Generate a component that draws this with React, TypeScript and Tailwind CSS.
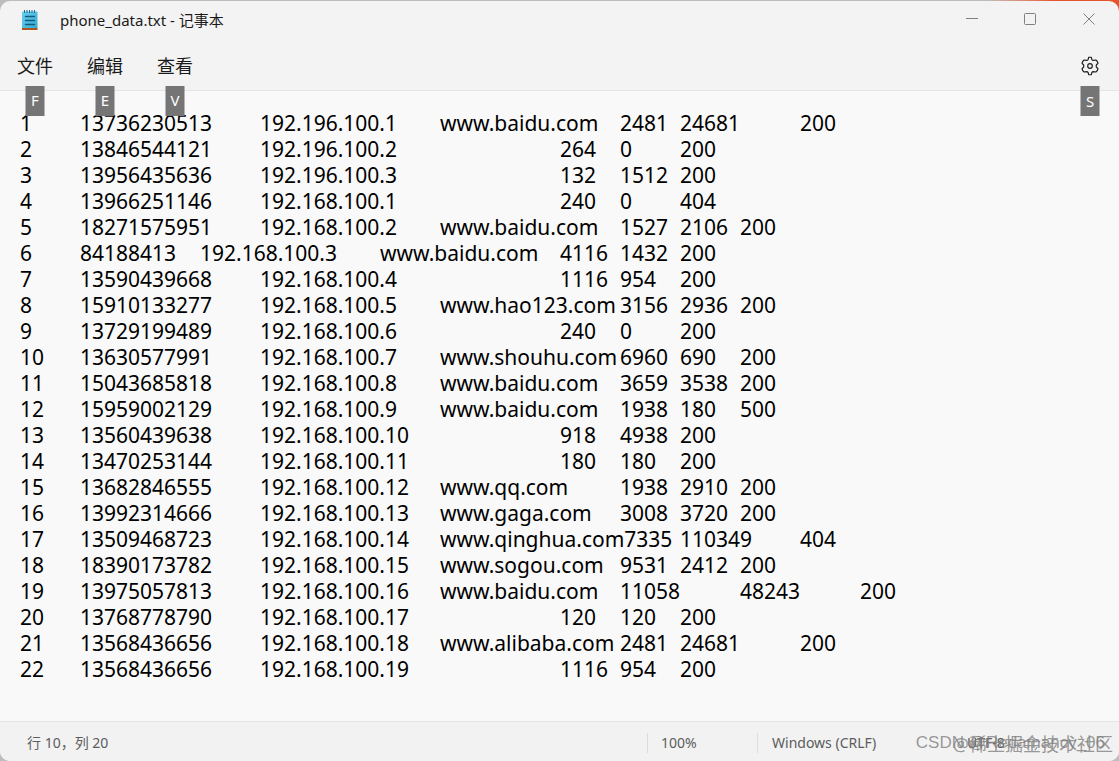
import type { ReactNode } from "react";

const menus = [
  { label: "文件", keyTip: "F" },
  { label: "编辑", keyTip: "E" },
  { label: "查看", keyTip: "V" },
];

const lines = [
  "1\t13736230513\t192.196.100.1\twww.baidu.com\t2481\t24681\t200",
  "2\t13846544121\t192.196.100.2\t\t\t264\t0\t200",
  "3\t13956435636\t192.196.100.3\t\t\t132\t1512\t200",
  "4\t13966251146\t192.168.100.1\t\t\t240\t0\t404",
  "5\t18271575951\t192.168.100.2\twww.baidu.com\t1527\t2106\t200",
  "6\t84188413\t192.168.100.3\twww.baidu.com\t4116\t1432\t200",
  "7\t13590439668\t192.168.100.4\t\t\t1116\t954\t200",
  "8\t15910133277\t192.168.100.5\twww.hao123.com\t3156\t2936\t200",
  "9\t13729199489\t192.168.100.6\t\t\t240\t0\t200",
  "10\t13630577991\t192.168.100.7\twww.shouhu.com\t6960\t690\t200",
  "11\t15043685818\t192.168.100.8\twww.baidu.com\t3659\t3538\t200",
  "12\t15959002129\t192.168.100.9\twww.baidu.com\t1938\t180\t500",
  "13\t13560439638\t192.168.100.10\t\t\t918\t4938\t200",
  "14\t13470253144\t192.168.100.11\t\t\t180\t180\t200",
  "15\t13682846555\t192.168.100.12\twww.qq.com\t1938\t2910\t200",
  "16\t13992314666\t192.168.100.13\twww.gaga.com\t3008\t3720\t200",
  "17\t13509468723\t192.168.100.14\twww.qinghua.com7335\t110349\t404",
  "18\t18390173782\t192.168.100.15\twww.sogou.com\t9531\t2412\t200",
  "19\t13975057813\t192.168.100.16\twww.baidu.com\t11058\t48243\t200",
  "20\t13768778790\t192.168.100.17\t\t\t120\t120\t200",
  "21\t13568436656\t192.168.100.18\twww.alibaba.com\t2481\t24681\t200",
  "22\t13568436656\t192.168.100.19\t\t\t1116\t954\t200",
];

function NotepadIcon() {
  return (
    <svg width="16" height="21" viewBox="0 0 16 21" aria-hidden="true">
      <defs>
        <linearGradient id="page" x1="0" y1="0" x2="1" y2="1">
          <stop offset="0" stopColor="#6ad0ee" />
          <stop offset="1" stopColor="#35a9d6" />
        </linearGradient>
      </defs>
      <rect x="0" y="1.5" width="15.5" height="17" rx="1" fill="url(#page)" />
      <rect x="0" y="18" width="15.5" height="2" fill="#a9561f" />
      <path d="M2.5 0v3M5 0v3M7.5 0v3M10 0v3M12.5 0v3" stroke="#1b6f93" />
      <path d="M3.5 6.5h9M3.5 10.5h9M3.5 14.5h9" stroke="#125b7d" strokeWidth="1.4" strokeLinecap="round" />
    </svg>
  );
}

function GearIcon() {
  return (
    <svg
      width="20"
      height="20"
      viewBox="0 0 20 20"
      fill="none"
      stroke="#1f1f1f"
      strokeWidth="1.2"
      strokeLinejoin="round"
      aria-hidden="true"
    >
      <path d="M8.7 1.4Q10 1.1 11.3 1.4L11.9 3.5Q12.3 4.4 13.4 4.4L15.9 4Q17.5 5.2 18 7.1L16.4 9Q15.9 10 16.4 11L18 12.9Q17.5 14.8 15.9 16L13.4 15.6Q12.3 15.6 11.9 16.5L11.3 18.6Q10 18.9 8.7 18.6L8.1 16.5Q7.7 15.6 6.6 15.6L4.1 16Q2.5 14.8 2 12.9L3.6 11Q4.1 10 3.6 9L2 7.1Q2.5 5.2 4.1 4L6.6 4.4Q7.7 4.4 8.1 3.5Z" />
      <circle cx="10" cy="10" r="2.3" />
    </svg>
  );
}

function KeyTip({ children }: { children: ReactNode }) {
  return (
    <kbd className="absolute top-full left-1/2 z-10 flex h-[30px] w-[19px] -translate-x-1/2 items-center justify-center bg-[#757575] font-[inherit] text-[15px] text-white">
      {children}
    </kbd>
  );
}

function TitleBar() {
  return (
    <header className="flex h-[38px] items-center pl-[22px]">
      <NotepadIcon />
      <h1 className="ml-[22px] flex-1 text-[15px] text-[#1a1a1a]">
        phone_data.txt - 记事本
      </h1>
      <div className="flex self-start text-[#808080]">
        <button aria-label="最小化" className="flex h-9 w-[58px] items-center justify-center">
          <svg width="12" height="12" stroke="currentColor"><path d="M0 5.5h12" /></svg>
        </button>
        <button aria-label="最大化" className="flex h-9 w-[58px] items-center justify-center">
          <svg width="12" height="12" stroke="currentColor" fill="none">
            <rect x=".5" y=".5" width="11" height="11" rx="1" />
          </svg>
        </button>
        <button aria-label="关闭" className="flex h-9 w-[60px] items-center justify-center">
          <svg width="12" height="12" stroke="currentColor"><path d="M.5.5l11 11M11.5.5l-11 11" /></svg>
        </button>
      </div>
    </header>
  );
}

function MenuBar() {
  return (
    <nav className="flex h-[52px] items-end border-b border-[#e5e5e5] pr-[19px] pb-1 pl-[17px]">
      {menus.map((menu) => (
        <button key={menu.label} className="relative mr-[34px] h-10 text-lg text-[#1a1a1a]">
          {menu.label}
          <KeyTip>{menu.keyTip}</KeyTip>
        </button>
      ))}
      <button aria-label="设置" className="relative ml-auto flex h-10 items-center">
        <GearIcon />
        <KeyTip>S</KeyTip>
      </button>
    </nav>
  );
}

function StatusBar() {
  return (
    <footer className="relative flex h-10 items-center border-t border-[#e5e5e5] bg-[#f2f2f2] pt-0.5 text-sm text-[#5c5c5c]">
      <span className="flex-1 pl-[27px]">行 10，列 20</span>
      <span className="w-[110px] border-l border-[#dcdcdc] pl-[13px]">100%</span>
      <span className="w-[196px] border-l border-[#dcdcdc] pl-[14px]">Windows (CRLF)</span>
      <span className="w-[166px] pl-[14px]">UTF-8</span>
      <span className="absolute right-[14px] bottom-[6px] font-['Liberation_Sans'] text-[17px] text-[#808080]/80">
        CSDN @Redamancy_06
      </span>
      <span className="absolute right-[6px] bottom-[3px] text-lg text-[#808080]/80">
        @稀土掘金技术社区
      </span>
    </footer>
  );
}

export default function App() {
  return (
    <div className="min-h-screen bg-linear-to-bl from-[#e8532b] from-3% to-[#bdbdbd] to-6% pt-px font-['Noto_Sans','Noto_Sans_CJK_SC',sans-serif]">
      <main className="flex min-h-[calc(100vh-1px)] flex-col overflow-hidden rounded-[10px] bg-[#f3f3f3]">
        <TitleBar />
        <MenuBar />
        <textarea
          aria-label="phone_data.txt"
          spellCheck={false}
          wrap="off"
          defaultValue={lines.join("\n")}
          className="flex-1 resize-none overflow-hidden bg-[#f9f9f9] px-5 pt-[19px] text-[21px] leading-[26px] text-black outline-none [tab-size:60px]"
        />
        <StatusBar />
      </main>
    </div>
  );
}
